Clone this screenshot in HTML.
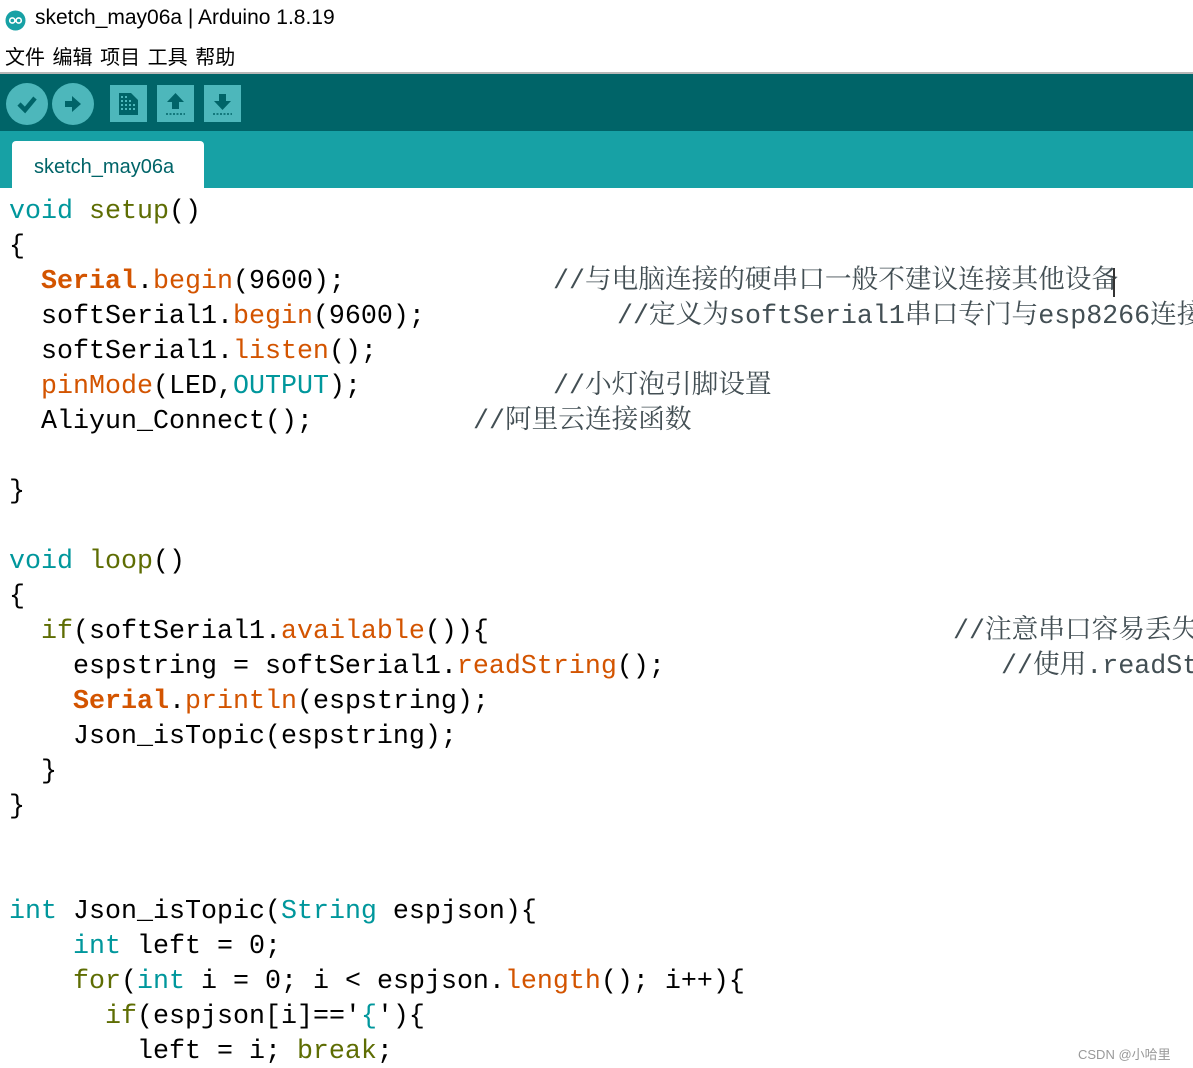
<!DOCTYPE html>
<html><head><meta charset="utf-8"><style>
*{margin:0;padding:0;box-sizing:border-box}
html,body{width:1193px;height:1068px;overflow:hidden}
body{background:#fff;position:relative;font-family:"Liberation Sans","Noto Sans CJK SC",sans-serif}
.title{position:absolute;left:35px;top:6px;font-size:21px;color:#000;white-space:nowrap}
.menu{position:absolute;left:5px;top:41px;font-size:20px;color:#000;white-space:nowrap;word-spacing:2px}
.sep{position:absolute;left:0;top:72px;width:1193px;height:2px;background:#b8b8b8}
.tb{position:absolute;left:0;top:74px;width:1193px;height:57px;background:#006468}
.tabbar{position:absolute;left:0;top:131px;width:1193px;height:57px;background:#17a1a5}
.tab{position:absolute;left:12px;top:141px;width:192px;height:48px;background:#fff;border-radius:4px 4px 0 0}
.tabt{position:absolute;left:34px;top:156px;font-size:20px;color:#006468}
.c{position:absolute;width:42px;height:42px;border-radius:50%;background:#4db7bb;top:83px}
.s{position:absolute;width:37px;height:37px;background:#4db7bb;top:85px}
.wrap{position:absolute;left:0;top:188px;width:1193px;height:880px;overflow:hidden}
.code{position:absolute;left:9px;top:7px;width:1184px;font-family:"Liberation Mono","Noto Serif CJK SC",monospace;font-size:26.67px;line-height:35px;color:#000}
.l{height:35px;position:relative;white-space:pre}
.k{color:#00979c}.o{color:#5e6d03}.f{color:#d35400}.b{color:#d35400;font-weight:bold}
.cm{position:absolute;top:0;color:#434f54;white-space:pre}
.wm{position:absolute;left:1078px;top:1044px;font-size:13px;color:#999}
</style></head><body>
<svg style="position:absolute;left:5px;top:10px" width="21" height="21" viewBox="0 0 21 21"><circle cx="10.5" cy="10.5" r="10" fill="#17a1a5"/><circle cx="7.3" cy="10.5" r="2.6" fill="none" stroke="#fff" stroke-width="1.6"/><circle cx="13.7" cy="10.5" r="2.6" fill="none" stroke="#fff" stroke-width="1.6"/></svg>
<div class="title">sketch_may06a | Arduino 1.8.19</div>
<div class="menu">文件 编辑 项目 工具 帮助</div>
<div class="sep"></div>
<div class="tb"></div>
<div class="c" style="left:6px"></div>
<div class="c" style="left:52px"></div>
<svg style="position:absolute;left:6px;top:83px" width="42" height="42"><path d="M13 21 L19 27 L29 15" fill="none" stroke="#006468" stroke-width="4.5"/></svg>
<svg style="position:absolute;left:52px;top:83px" width="42" height="42"><path d="M13 18 H20 V13 L29 21 L20 29 V24 H13 Z" fill="#006468"/></svg>
<div class="s" style="left:110px"></div>
<div class="s" style="left:157px"></div>
<div class="s" style="left:204px"></div>
<svg style="position:absolute;left:110px;top:85px" width="37" height="37"><path d="M9 8 H21 L28 15 V30 H9 Z" fill="#006468"/><g fill="#4db7bb"><rect x="11" y="11" width="2" height="2"/><rect x="15" y="11" width="2" height="2"/><rect x="11" y="15" width="2" height="2"/><rect x="15" y="15" width="2" height="2"/><rect x="19" y="15" width="2" height="2"/><rect x="11" y="19" width="2" height="2"/><rect x="15" y="19" width="2" height="2"/><rect x="19" y="19" width="2" height="2"/><rect x="23" y="19" width="2" height="2"/><rect x="11" y="23" width="2" height="2"/><rect x="15" y="23" width="2" height="2"/><rect x="19" y="23" width="2" height="2"/><rect x="23" y="23" width="2" height="2"/></g></svg>
<svg style="position:absolute;left:157px;top:85px" width="37" height="37"><path d="M18.5 8 L27 17 H22 V24 H15 V17 H10 Z" fill="#006468"/><path d="M9 29 H28" stroke="#006468" stroke-width="1.5" stroke-dasharray="2 1.5"/></svg>
<svg style="position:absolute;left:204px;top:85px" width="37" height="37"><path d="M18.5 25 L27 16 H22 V9 H15 V16 H10 Z" fill="#006468"/><path d="M9 29 H28" stroke="#006468" stroke-width="1.5" stroke-dasharray="2 1.5"/></svg>
<div class="tabbar"></div>
<div class="tab"></div>
<div class="tabt">sketch_may06a</div>
<div class="wrap"><div class="code"><div class="l"><span class="k">void</span> <span class="o">setup</span>()</div><div class="l">{</div><div class="l">  <span class="b">Serial</span>.<span class="f">begin</span>(9600);<span class="cm" style="left:544px">//与电脑连接的硬串口一般不建议连接其他设备</span><span style="position:absolute;left:1104px;top:3px;width:2px;height:29px;background:#333"></span></div><div class="l">  softSerial1.<span class="f">begin</span>(9600);<span class="cm" style="left:608px">//定义为softSerial1串口专门与esp8266连接</span></div><div class="l">  softSerial1.<span class="f">listen</span>();</div><div class="l">  <span class="f">pinMode</span>(LED,<span class="k">OUTPUT</span>);<span class="cm" style="left:544px">//小灯泡引脚设置</span></div><div class="l">  Aliyun_Connect();<span class="cm" style="left:464px">//阿里云连接函数</span></div><div class="l"> </div><div class="l">}</div><div class="l"> </div><div class="l"><span class="k">void</span> <span class="o">loop</span>()</div><div class="l">{</div><div class="l">  <span class="o">if</span>(softSerial1.<span class="f">available</span>()){<span class="cm" style="left:944px">//注意串口容易丢失</span></div><div class="l">    espstring = softSerial1.<span class="f">readString</span>();<span class="cm" style="left:992px">//使用.readString</span></div><div class="l">    <span class="b">Serial</span>.<span class="f">println</span>(espstring);</div><div class="l">    Json_isTopic(espstring);</div><div class="l">  }</div><div class="l">}</div><div class="l"> </div><div class="l"> </div><div class="l"><span class="k">int</span> Json_isTopic(<span class="k">String</span> espjson){</div><div class="l">    <span class="k">int</span> left = 0;</div><div class="l">    <span class="o">for</span>(<span class="k">int</span> i = 0; i &lt; espjson.<span class="f">length</span>(); i++){</div><div class="l">      <span class="o">if</span>(espjson[i]=='<span class="k">{</span>'){</div><div class="l">        left = i; <span class="o">break</span>;</div></div></div>
<div class="wm">CSDN @小哈里</div>
</body></html>
